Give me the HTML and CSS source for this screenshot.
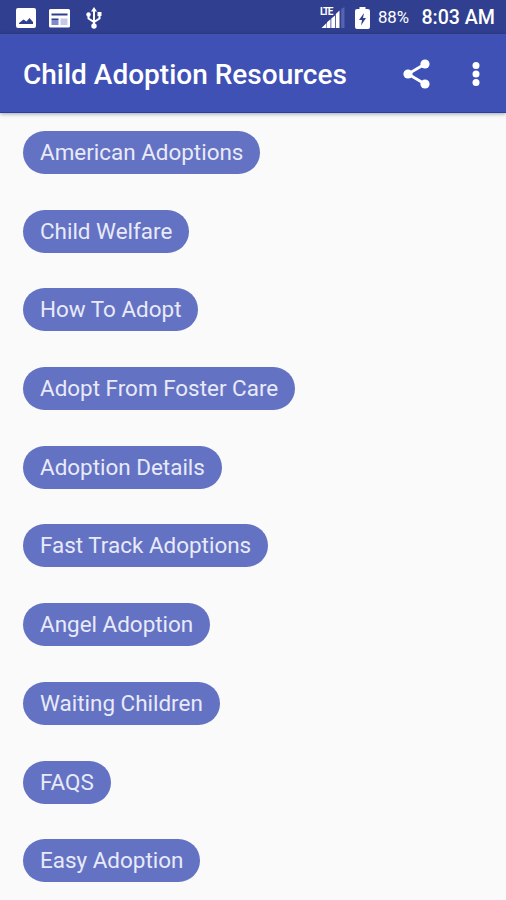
FILE: index.html
```html
<!DOCTYPE html>
<html lang="en">
<head>
  <meta charset="UTF-8">
  <meta name="viewport" content="width=device-width, initial-scale=1.0">
  <title>Child Adoption Resources</title>
  <link rel="stylesheet" href="styles.css">
</head>
<body>
  <div class="status-bar">
    <div class="notifications">
      <svg class="icon-image" width="20" height="20" viewBox="0 0 20 20">
        <path fill="#fff" fill-rule="evenodd" d="M2 0h16a2 2 0 0 1 2 2v16a2 2 0 0 1-2 2H2a2 2 0 0 1-2-2V2a2 2 0 0 1 2-2zM3 16h14v-2l-3.500-4-3 3.500-3-2L3 15z"/>
      </svg>
      <svg class="icon-news" width="21" height="20" viewBox="0 0 21 20">
        <path fill="#fff" fill-rule="evenodd" d="M1.500 1h18A1.500 1.500 0 0 1 21 2.500v15.500a1.500 1.500 0 0 1-1.500 1.500h-18A1.500 1.500 0 0 1 0 18v-15.500A1.500 1.500 0 0 1 1.500 1zM2.500 5.500v2h16v-2z"/>
        <path fill="#303f8f" d="M2.500 10.500h7V12h-7z"/>
        <path fill="#7f8ac8" d="M2.500 12h7v5h-7z"/>
        <path fill="#c3c9ea" d="M11.500 10.500h7V17h-7z"/>
      </svg>
      <svg width="16" height="22" viewBox="0 0 16 22">
        <path fill="none" stroke="#fff" stroke-width="2" d="M8 3v16M2.500 8v3.500L8 15l5.500-3.500V7"/>
        <path fill="#fff" d="M8 0l3 4.500H5zM11.500 5h4v4h-4z"/>
        <circle cx="2.500" cy="7.500" r="2.200" fill="#fff"/>
        <circle cx="8" cy="19" r="2.700" fill="#fff"/>
      </svg>
    </div>
    <div class="system">
      <div class="signal">
        <span class="network">LTE</span>
        <svg width="25" height="22" viewBox="0 0 25 22">
          <path fill="#fff" d="M1.500 21l5-5V21zM7 15.200l3.500-3V21H7zM11.300 11.500l3.700-3V21h-3.700zM15.800 7L19.500 3.500V21h-3.700z"/>
          <path fill="#5563b0" d="M21.200 2L24.500 0v21h-3.300z"/>
        </svg>
      </div>
      <svg class="battery" width="15" height="22" viewBox="0 0 15 22">
        <path fill="#fff" d="M4.500 0h6v2H13a2 2 0 0 1 2 2v16a2 2 0 0 1-2 2H2a2 2 0 0 1-2-2V4a2 2 0 0 1 2-2h2.500z"/>
        <path fill="#303f8f" d="M9 6l-5 7h3l-1 5.500L11 11H8z"/>
      </svg>
      <span class="percent">88%</span>
      <span class="time">8:03 AM</span>
    </div>
  </div>

  <header class="app-bar">
    <h1>Child Adoption Resources</h1>
    <svg class="share" width="28" height="30" viewBox="0 0 28 30">
      <path fill="none" stroke="#fff" stroke-width="2.800" d="M22 5L5 15l17 10"/>
      <circle cx="22" cy="5" r="4.600" fill="#fff"/>
      <circle cx="5" cy="15" r="4.600" fill="#fff"/>
      <circle cx="22" cy="25" r="4.600" fill="#fff"/>
    </svg>
    <svg width="8" height="26" viewBox="0 0 8 26">
      <circle cx="4" cy="4.500" r="3.500" fill="#fff"/>
      <circle cx="4" cy="13" r="3.500" fill="#fff"/>
      <circle cx="4" cy="21.500" r="3.500" fill="#fff"/>
    </svg>
  </header>

  <main class="links">
    <button class="chip">American Adoptions</button>
    <button class="chip">Child Welfare</button>
    <button class="chip">How To Adopt</button>
    <button class="chip">Adopt From Foster Care</button>
    <button class="chip">Adoption Details</button>
    <button class="chip">Fast Track Adoptions</button>
    <button class="chip">Angel Adoption</button>
    <button class="chip">Waiting Children</button>
    <button class="chip">FAQS</button>
    <button class="chip">Easy Adoption</button>
  </main>
</body>
</html>
```
FILE: styles.css
```css
* {
  box-sizing: border-box;
}

body {
  margin: 0;
  height: 900px;
  overflow: hidden;
  background: #fafafa;
  font-family: Roboto, "Liberation Sans", sans-serif;
}

svg {
  display: block;
  flex: none;
}

/* Status bar */
.status-bar {
  display: flex;
  justify-content: space-between;
  height: 34px;
  padding: 1px 11px 0 16px;
  background: #303f8f;
  color: #fff;
}

.notifications,
.system {
  display: flex;
  align-items: center;
}

.icon-image {
  margin-right: 13px;
}

.icon-news {
  margin-right: 16px;
}

.signal {
  position: relative;
  margin-right: 10px;
}

.network {
  position: absolute;
  top: 0;
  left: 0;
  font-size: 10px;
  font-weight: 700;
  line-height: 10px;
  letter-spacing: -1.3px;
}

.battery {
  margin-right: 8px;
}

.percent {
  width: 43.5px;
  font-size: 16.8px;
  line-height: 35px;
}

.time {
  font-size: 19.6px;
  font-weight: 500;
  line-height: 35px;
}

/* App bar */
.app-bar {
  position: relative;
  display: flex;
  align-items: center;
  height: 79px;
  padding: 1px 26px 0 23px;
  background: #3f51b5;
  border-bottom: 1px solid #2440a4;
  box-shadow: 0 1px 4px rgba(0, 0, 0, 0.35);
}

.app-bar h1 {
  flex: 1;
  margin: 0;
  padding-top: 2px;
  color: #fff;
  font-size: 28px;
  font-weight: 500;
  line-height: 36px;
  white-space: nowrap;
}

.share {
  margin-right: 41px;
}

/* Resource links */
.links {
  display: flex;
  flex-direction: column;
  align-items: flex-start;
  gap: 35.7px;
  padding: 18px 23px 0;
}

.chip {
  flex: none;
  height: 43px;
  padding: 0 17px;
  border: none;
  border-radius: 22px;
  background: #6472c3;
  color: #e8eaf9;
  font-family: inherit;
  font-size: 22.45px;
  line-height: 43px;
  white-space: nowrap;
  cursor: pointer;
}
```
